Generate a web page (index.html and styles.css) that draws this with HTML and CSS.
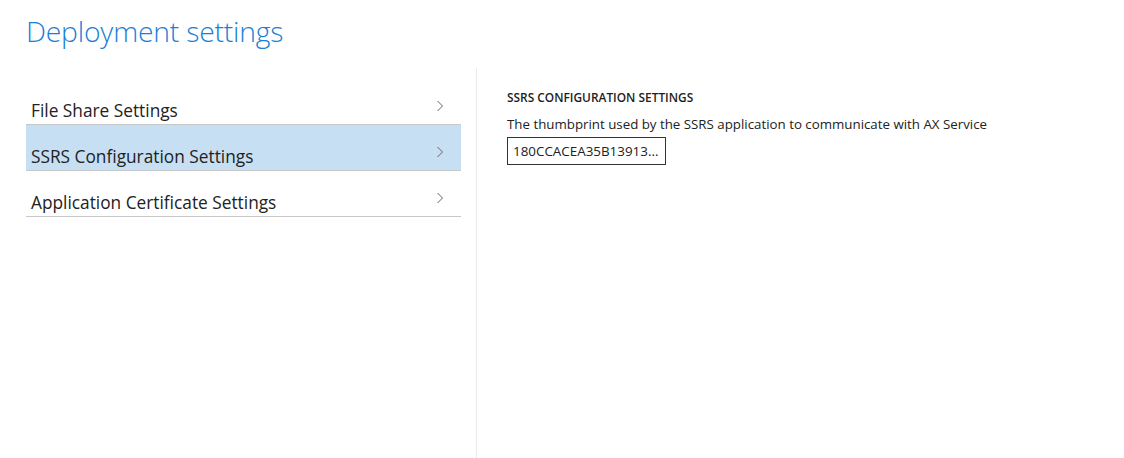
FILE: index.html
```html
<!DOCTYPE html>
<html>
<head>
<meta charset="utf-8">
<link rel="stylesheet" href="styles.css">
</head>
<body>
<div class="page">
  <h1 class="title">Deployment settings</h1>
  <div class="content">
    <nav class="nav">
      <div class="nav-item"><span class="nav-label">File Share Settings</span><svg class="chev" width="8" height="12" viewBox="0 0 8 12"><polyline points="1.5,1 6.5,6 1.5,11" fill="none" stroke="#666" stroke-width="1"/></svg></div>
      <div class="nav-item active"><span class="nav-label">SSRS Configuration Settings</span><svg class="chev" width="8" height="12" viewBox="0 0 8 12"><polyline points="1.5,1 6.5,6 1.5,11" fill="none" stroke="#666" stroke-width="1"/></svg></div>
      <div class="nav-item"><span class="nav-label">Application Certificate Settings</span><svg class="chev" width="8" height="12" viewBox="0 0 8 12"><polyline points="1.5,1 6.5,6 1.5,11" fill="none" stroke="#666" stroke-width="1"/></svg></div>
    </nav>
    <div class="divider"></div>
    <section class="detail">
      <h2 class="detail-head">SSRS CONFIGURATION SETTINGS</h2>
      <div class="detail-desc">The thumbprint used by the SSRS application to communicate with AX Service</div>
      <div class="field">180CCACEA35B13913...</div>
    </section>
  </div>
</div>
</body>
</html>
```
FILE: styles.css
```css
html, body {
  margin: 0;
  padding: 0;
  background: #ffffff;
}
body {
  font-family: "Open Sans", "Noto Sans", sans-serif;
  color: #212121;
  width: 1124px;
  height: 458px;
  overflow: hidden;
}
.page {
  padding: 0 0 0 26px;
}
.title {
  margin: 0;
  padding-top: 12px;
  height: 68px;
  box-sizing: border-box;
  font-size: 28.3px;
  font-weight: 300;
  color: #1a7fd7;
  letter-spacing: -0.2px;
  line-height: 38px;
}
.content {
  display: flex;
  height: 390px;
}
.nav {
  width: 435px;
  padding-top: 11px;
}
.nav-item {
  display: flex;
  justify-content: space-between;
  align-items: flex-end;
  height: 45px;
  border-bottom: 1px solid #c8c8c8;
  padding: 0 17px 0 5px;
}
.nav-label {
  font-size: 17.3px;
  line-height: 22px;
  padding-bottom: 2px;
  color: #222;
}
.chev {
  display: block;
  margin-bottom: 12px;
}
.active {
  background: #c7dff3;
}
.divider {
  width: 1px;
  background: #ebebeb;
  margin-left: 15px;
  height: 390px;
}
.detail {
  padding: 21px 0 0 30px;
}
.detail-head {
  margin: 0;
  font-size: 11.9px;
  font-weight: 600;
  line-height: 16px;
  color: #1e1e1e;
}
.detail-desc {
  margin-top: 10px;
  font-size: 13.3px;
  line-height: 18px;
  color: #222;
}
.field {
  margin-top: 4px;
  width: 152px;
  height: 26px;
  border: 1px solid #333;
  font-size: 13.4px;
  line-height: 26px;
  padding-left: 5px;
  color: #222;
}
```
